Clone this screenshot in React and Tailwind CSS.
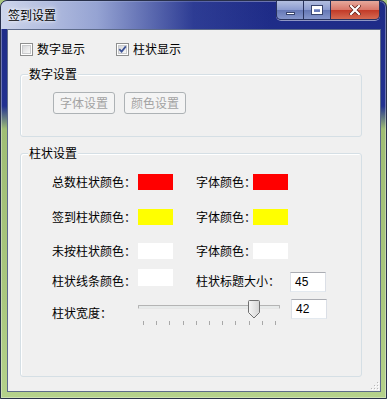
import React from "react";

const cjk = "font-['Noto_Sans_CJK_SC','Liberation_Sans',sans-serif]";

function Checkbox({ checked, label, className = "" }) {
  return (
    <label className={"flex items-center h-[14px] " + className}>
      <span className="w-[13px] h-[13px] border border-[#8e8f8f] bg-white p-[1px] flex">
        <span className="relative flex-1 border border-[#c9cacc] bg-[linear-gradient(135deg,#d7d8da,#f8f8f8)]">
          {checked && (
            <svg className="absolute -left-[1px] -top-[1px]" width="9" height="9" viewBox="0 0 9 9">
              <path d="M1.3 4.2 L3.6 6.6 L7.8 1.4" fill="none" stroke="#3c5296" strokeWidth="1.7" />
            </svg>
          )}
        </span>
      </span>
      <span className="ml-[4px] text-[12px] leading-[14px]">{label}</span>
    </label>
  );
}

function Swatch({ color }) {
  return <span className={"block w-[35px] h-[16px] shrink-0 " + color} />;
}

function TextBox({ value }) {
  return (
    <div className="w-[36px] h-[20px] shrink-0 border border-[#abadb3] border-x-[#dbdfe6] border-b-[#e3e9ef] bg-white pl-[4px] pt-[2px] text-[12px] leading-[14px] font-['Liberation_Sans',sans-serif]">
      {value}
    </div>
  );
}

function GroupBox({ title, className, children }) {
  return (
    <div className={"relative rounded-[3px] border border-[#d5dfe5] shadow-[inset_1px_1px_0_#fff] " + className}>
      <span className="absolute -top-[8px] left-[7px] px-[1px] bg-[#f0f0f0] text-[12px] leading-[14px]">{title}</span>
      {children}
    </div>
  );
}

function Slider({ value, max }) {
  const left = 5 + (value / max) * 132;
  const ticks = Array.from({ length: 11 }, (_, i) => i);
  return (
    <div className="relative w-[142px] h-[28px] shrink-0">
      <div className="absolute top-[6px] left-0 right-0 h-[4px] rounded-[1px] border border-[#b4b4b4] border-b-[#e6e6e6] bg-[#e7eaea]" />
      <svg className="absolute top-[1px]" style={{ left: left - 6 }} width="12" height="19" viewBox="0 0 12 19">
        <defs>
          <linearGradient id="th" x1="0" y1="0" x2="1" y2="0">
            <stop offset="0" stopColor="#f6f6f6" />
            <stop offset="1" stopColor="#d4d4d4" />
          </linearGradient>
        </defs>
        <path d="M1.5 0.5 H10.5 Q11.5 0.5 11.5 1.5 V12.5 L6 18 L0.5 12.5 V1.5 Q0.5 0.5 1.5 0.5 Z" fill="url(#th)" stroke="#707070" />
      </svg>
      <div className="absolute top-[22px] left-[5px] w-[133px] flex justify-between">
        {ticks.map((t) => (
          <span key={t} className="block w-px h-[4px] bg-[#a8a8a8]" />
        ))}
      </div>
    </div>
  );
}

export default function App() {
  return (
    <div className={"w-[387px] h-[399px] bg-[#a9c67e] " + cjk}>
      <div className="w-full h-full flex flex-col rounded-t-[7px] border border-[#28304a] bg-[linear-gradient(to_bottom,#1e2b86_0px,#223190_105px,#9fbd75_128px,#aac87f_300px,#b4d18b_100%)] shadow-[inset_0_0_0_1px_rgba(255,255,255,0.35)]">
        <div className="h-[28px] flex items-start rounded-t-[6px] bg-[linear-gradient(to_right,rgba(214,222,240,0.95)_0%,rgba(170,184,224,0.85)_25%,rgba(60,76,160,0.5)_50%,rgba(30,43,134,0)_70%)]">
          <span className="ml-[7px] mt-[7px] text-[12px] leading-[14px] text-black [text-shadow:0_0_6px_#fff,0_0_3px_#fff]">签到设置</span>
          <div className="ml-auto mr-[6px] flex h-[19px] rounded-b-[5px] border border-t-0 border-[#29335e] overflow-hidden shadow-[0_1px_0_rgba(255,255,255,0.5)]">
            <div className="w-[27px] flex items-end justify-center pb-[4px] border-r border-[#29335e] bg-[linear-gradient(to_bottom,#b3bfe0_0%,#8c9cd0_48%,#6678b6_52%,#8596cc_100%)]">
              <span className="block w-[9px] h-[3px] bg-white border border-[#39456e]" />
            </div>
            <div className="w-[27px] flex items-center justify-center border-r border-[#29335e] bg-[linear-gradient(to_bottom,#b3bfe0_0%,#8c9cd0_48%,#6678b6_52%,#8596cc_100%)]">
              <span className="block w-[10px] h-[8px] border-[2px] border-t-[3px] border-white outline outline-[#39456e]" />
            </div>
            <div className="w-[48px] flex items-center justify-center bg-[linear-gradient(to_bottom,#e6a99c_0%,#d9786a_48%,#c23b28_52%,#d46a52_100%)]">
              <svg width="12" height="10" viewBox="0 0 12 10">
                <path d="M2 1 L10 9 M10 1 L2 9" stroke="#5a1a12" strokeWidth="3.6" strokeLinecap="square" />
                <path d="M2 1 L10 9 M10 1 L2 9" stroke="#fff" strokeWidth="2.2" strokeLinecap="square" />
              </svg>
            </div>
          </div>
        </div>
        <div className="flex-1 flex pl-[6px] pr-[5px] pb-[6px]">
          <div className="relative flex-1 border border-[#5d6b8a] bg-[#f0f0f0] px-[12px] pt-[12px] text-black">
            <div className="flex">
              <Checkbox label="数字显示" className="w-[96px]" />
              <Checkbox checked label="柱状显示" />
            </div>

            <GroupBox title="数字设置" className="mt-[18px] h-[63px] w-[342px]">
              <div className="flex gap-[9px] pl-[32px] pt-[17px]">
                {["字体设置", "颜色设置"].map((t) => (
                  <div key={t} className="w-[62px] h-[22px] flex items-center justify-center rounded-[3px] border border-[#adb2b5] bg-[#f4f4f4] text-[12px] text-[#a3a3a3]">
                    {t}
                  </div>
                ))}
              </div>
            </GroupBox>

            <GroupBox title="柱状设置" className="mt-[16px] h-[224px] w-[342px]">
              <div className="pl-[31px] pt-[20px] text-[12px] leading-[14px]">
                <div className="flex items-center h-[16px]">
                  <span className="w-[86px] whitespace-nowrap">总数柱状颜色：</span>
                  <Swatch color="bg-[#ff0000]" />
                  <span className="ml-[23px] w-[57px] whitespace-nowrap">字体颜色：</span>
                  <Swatch color="bg-[#ff0000]" />
                </div>
                <div className="flex items-center h-[16px] mt-[19px]">
                  <span className="w-[86px] whitespace-nowrap">签到柱状颜色：</span>
                  <Swatch color="bg-[#ffff00]" />
                  <span className="ml-[23px] w-[57px] whitespace-nowrap">字体颜色：</span>
                  <Swatch color="bg-[#ffff00]" />
                </div>
                <div className="flex items-center h-[16px] mt-[18px]">
                  <span className="w-[86px] whitespace-nowrap">未按柱状颜色：</span>
                  <Swatch color="bg-white" />
                  <span className="ml-[23px] w-[57px] whitespace-nowrap">字体颜色：</span>
                  <Swatch color="bg-white" />
                </div>
                <div className="flex items-start h-[23px] mt-[10px]">
                  <span className="w-[86px] mt-[5px] whitespace-nowrap">柱状线条颜色：</span>
                  <span className="block w-[35px] h-[17px] bg-white shrink-0" />
                  <span className="ml-[23px] w-[94px] mt-[5px] whitespace-nowrap">柱状标题大小：</span>
                  <div className="mt-[3px]">
                    <TextBox value="45" />
                  </div>
                </div>
                <div className="flex items-start mt-[7px]">
                  <span className="w-[86px] mt-[7px] whitespace-nowrap">柱状宽度：</span>
                  <Slider value={42} max={50} />
                  <div className="ml-[11px]">
                    <TextBox value="42" />
                  </div>
                </div>
              </div>
            </GroupBox>

            <svg className="absolute right-[1px] bottom-[1px]" width="10" height="10" viewBox="0 0 10 10">
              {[[8, 2], [8, 5], [5, 5], [8, 8], [5, 8], [2, 8]].map(([x, y]) => (
                <g key={x + "-" + y}>
                  <rect x={x} y={y} width="1" height="1" fill="#b8b8b8" />
                  <rect x={x + 1} y={y + 1} width="1" height="1" fill="#fff" />
                </g>
              ))}
            </svg>
          </div>
        </div>
      </div>
    </div>
  );
}
